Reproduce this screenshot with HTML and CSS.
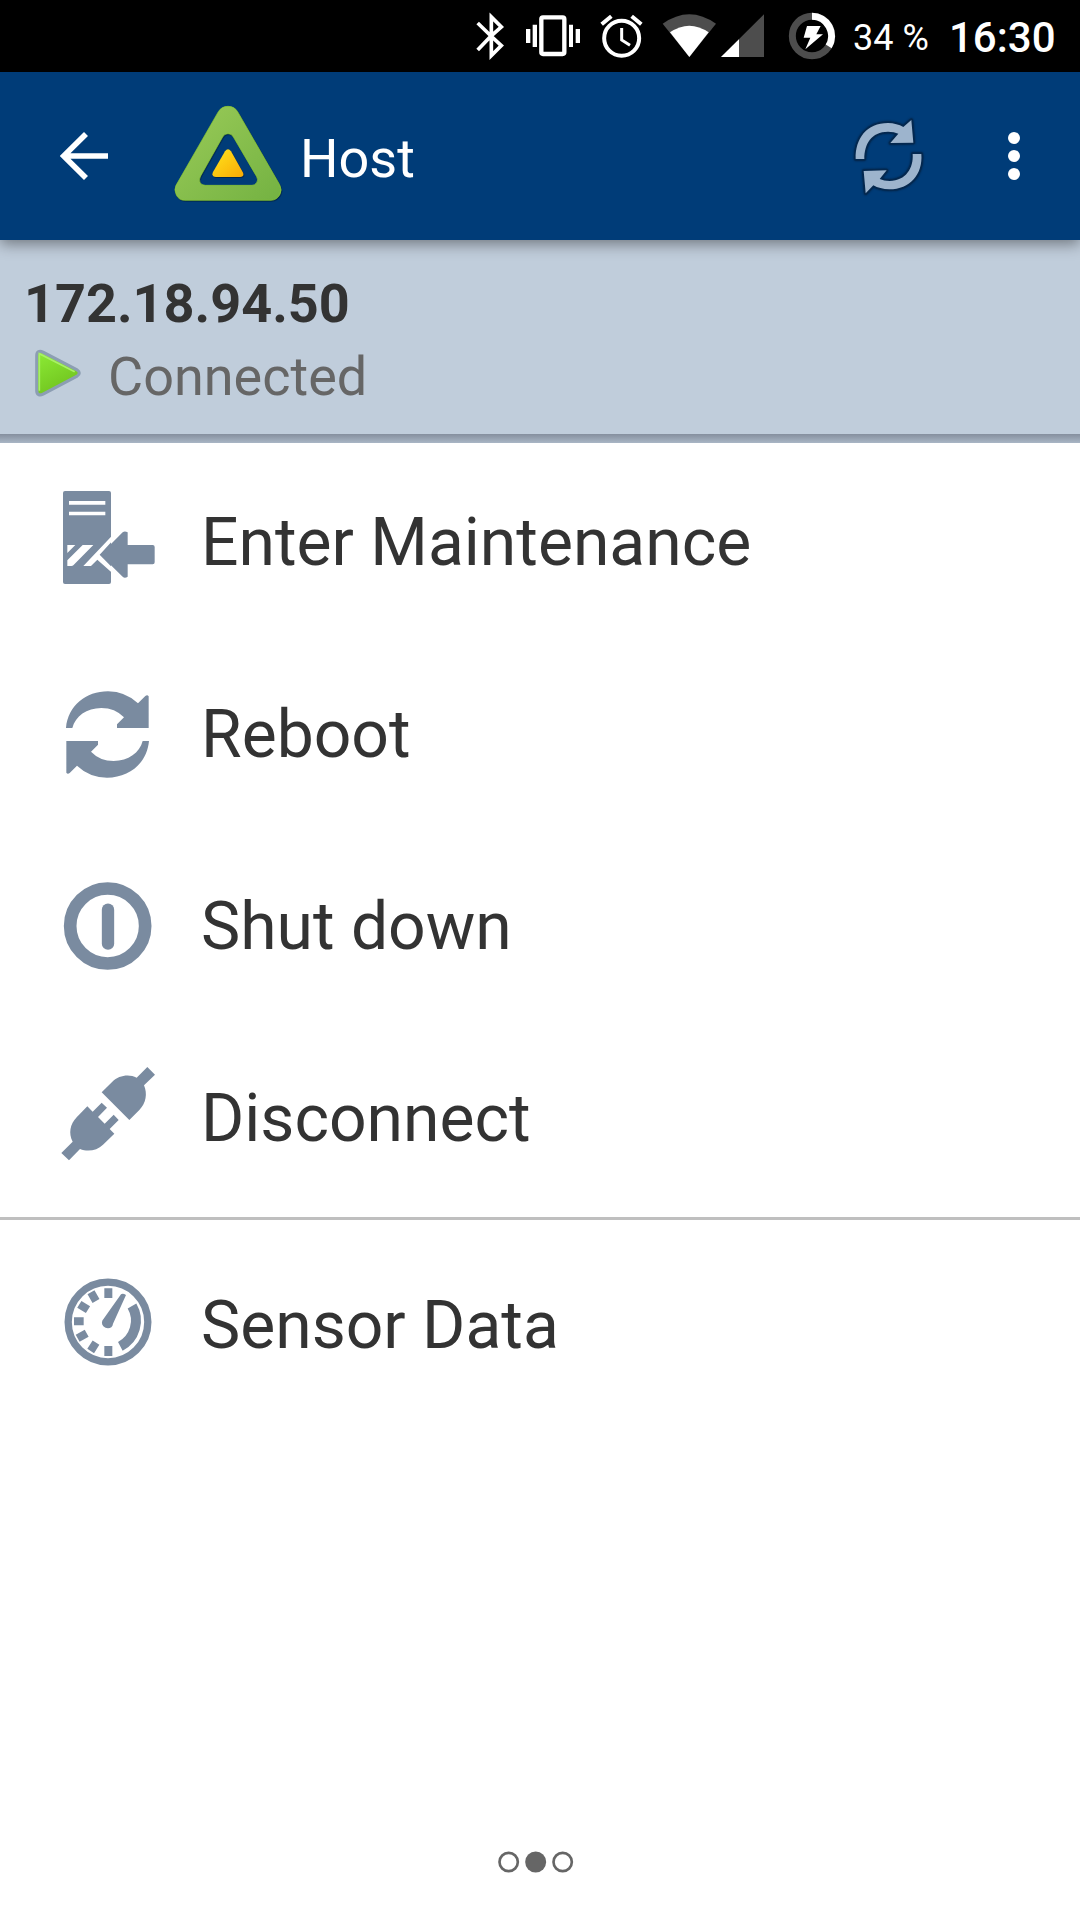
FILE: index.html
```
<!DOCTYPE html>
<html lang="en">
<head>
<meta charset="utf-8">
<meta name="viewport" content="width=device-width">
<title>Host</title>
<link rel="stylesheet" href="styles.css">
</head>
<body>
<div class="screen">
  <div class="status">
    <svg class="status-icons" viewBox="0 0 915 216">
      <path d="M53 69 93 108 53 150M93 108 124 137 94 167V51L124 81Z" fill="none" stroke="#fff" stroke-width="11"/>
      <g fill="#fff"><path d="M198 87h13v42h-13zM218 74h13v67h-13zM327 74h12v67h-12zM347 87h13v42h-13z"/></g>
      <rect x="244" y="52" width="69" height="110" rx="5" fill="none" stroke="#fff" stroke-width="13"/>
      <g fill="none" stroke="#fff"><circle cx="485" cy="115" r="52.500" stroke-width="12"/><path d="M485 84v36l25 16" stroke-width="9"/><path d="M425 73l29-24M515 49l29 24" stroke-width="12"/></g>
      <path d="M608 71Q688 14 768 71L688 171Z" fill="#4d4d4d"/>
      <path d="M630 97Q688 57 746 97L688 171Z" fill="#fff"/>
      <path d="M783 171 912 43V171Z" fill="#4d4d4d"/>
      <path d="M783 171 837 118V171Z" fill="#fff"/>
    </svg>
    <svg class="battery" viewBox="72 0 168 216">
      <circle cx="156" cy="108" r="59" fill="none" stroke="#4d4d4d" stroke-width="21"/>
      <path d="M156 49A59 59 0 0 1 206 139" fill="none" stroke="#fff" stroke-width="21"/>
      <path d="M141 78h41l-13 25h20l-53 45 15-35h-20z" fill="#fff"/>
    </svg>
    <span class="percent">34 %</span>
    <span class="clock">16:30</span>
  </div>

  <header class="bar">
    <svg class="back" viewBox="60 -54 150 504"><path d="M204 198H73M138 132 71 198l67 66" fill="none" stroke="#fff" stroke-width="17"/></svg>
    <svg class="logo" viewBox="396 -54 336 504">
      <defs>
        <linearGradient id="green" x1="0" y1="0" x2="1" y2="1"><stop offset="0" stop-color="#9acb58"/><stop offset="1" stop-color="#74b242"/></linearGradient>
        <linearGradient id="gold" x1="0" y1="0" x2="1" y2="1"><stop offset="0" stop-color="#ffe51c"/><stop offset="1" stop-color="#f9aa06"/></linearGradient>
      </defs>
      <path class="drop" fill="url(#green)" stroke="#8fd02f" stroke-width="2" fill-rule="evenodd" d="M535 65Q545 49 564 49T593 65L719 284Q728 300 719 315T694 331H434Q417 331 409 315T408 286ZM548 141Q553 131 564 131T580 141L650 260Q656 270 650 278T636 286H496Q484 286 480 277T482 258Z"/>
      <path class="drop" fill="url(#gold)" d="M555 184Q564 172 573 184L608 246Q615 260 600 261H528Q513 260 519 246Z"/>
    </svg>
    <h1 class="title">Host</h1>
    <svg class="refresh" viewBox="60 -84 240 504">
      <g class="glow" fill="#9db4cd" stroke="#04284f" stroke-width="10" stroke-linejoin="round" paint-order="stroke">
        <path d="M77 177C75 116 110 69 174 69Q201 70 220 81L244 60 250 128 181 129 205 101Q193 95 174 95C124 95 103 132 103 177Z"/>
        <path d="M274 162C279 223 240 268 178 268Q149 267 130 256L107 280 101 213 170 211 149 237Q162 243 179 243C228 242 251 204 248 162Z"/>
      </g>
    </svg>
    <svg class="more" viewBox="522 -84 60 504"><g fill="#fff"><circle cx="552" cy="114" r="18"/><circle cx="552" cy="168" r="18"/><circle cx="552" cy="222" r="18"/></g></svg>
  </header>

  <section class="host">
    <div class="address">172.18.94.50</div>
    <div class="state">
      <svg class="play" viewBox="99 351 150 156">
        <defs><linearGradient id="lime" x1="0" y1="0" x2=".5" y2="1"><stop offset="0" stop-color="#8cea35"/><stop offset="1" stop-color="#71c41f"/></linearGradient></defs>
        <path d="M127 371 229 424Q237 429 229 434L127 488Q115 494 115 482V377Q115 365 127 371Z" fill="url(#lime)" stroke="#8c9eb3" stroke-width="19" stroke-linejoin="round" paint-order="stroke"/>
        <path d="M118 482V371L224 425" fill="none" stroke="#a8f067" stroke-width="5"/>
      </svg>
      <span>Connected</span>
    </div>
  </section>

  <ul class="menu">
    <li class="item">
      <svg class="icon" viewBox="0 -72 420 576">
        <rect x="69" y="63" width="144" height="279" rx="6"/>
        <path class="cut" d="M87 93H196V104H87ZM87 125H196V136H87ZM82 225H106L82 249ZM128 225H160L100 286Q98 288 94 288H82V271Z"/>
        <path class="cut" d="M130 288 216 197V214L179 254 216 292V308L172 269 153 288Z"/>
        <path d="M181 254 248 187Q254 182 263 187V225H338Q344 225 344 231V277Q344 283 338 283H263V320Q254 326 248 320Z"/>
      </svg>
      <span>Enter Maintenance</span>
    </li>
    <li class="item">
      <svg class="icon" viewBox="0 -96 420 576">
        <path id="arrow" d="M78 174C84 107 138 64 204 64Q257 65 294 100L316 78Q322 73 326 79V174H231V163L252 142Q225 114 184 114C140 114 106 139 97 174Z"/>
        <use href="#arrow" transform="rotate(180 202.500 193.500)"/>
      </svg>
      <span>Reboot</span>
    </li>
    <li class="item">
      <svg class="icon" viewBox="0 -90 420 576">
        <circle class="line" cx="203" cy="198" r="112.500" stroke-width="38"/>
        <path class="line" d="M204 149V251" stroke-width="37" stroke-linecap="round"/>
      </svg>
      <span>Shut down</span>
    </li>
    <li class="item">
      <svg class="icon" viewBox="0 -84 420 576">
        <path d="M185 127 217 95C236 76 267 71 290 83L322 51 345 74 312 106C323 131 318 160 298 180L268 210Z"/>
        <path d="M142 169 158 185 185 158 201 173 174 201 194 221 221 194 236 210 209 237 223 251 189 284C171 302 143 306 120 297L87 331 64 309 98 275C85 251 90 222 110 202Z"/>
      </svg>
      <span>Disconnect</span>
    </li>
    <li class="item separated">
      <svg class="icon" viewBox="0 -93 420 576">
        <circle class="line" cx="204" cy="186" r="119.500" stroke-width="22"/>
        <path class="line" stroke-width="24" d="M205 85V114M205 258V288M102 184H131M153 97 168 123M118 133 144 149M113 235 140 220M152 273 168 248"/>
        <path class="line" stroke-width="30" d="M276 138A87 87 0 0 1 241 259"/>
        <path d="M243 103Q248 98 258 105L219 191C218 206 200 209 190 199Q181 187 191 176Z"/>
      </svg>
      <span>Sensor Data</span>
    </li>
  </ul>

  <svg class="pager" viewBox="54 30 228 72">
    <g fill="none" stroke="#666" stroke-width="8"><circle cx="86" cy="66" r="27.500"/><circle cx="248" cy="66" r="27.500"/></g><circle cx="167" cy="66" r="31.500" fill="#666"/>
  </svg>
</div>
</body>
</html>
```
FILE: styles.css
```
* { box-sizing: border-box; }
body { margin: 0; font-family: Roboto, "Noto Sans", sans-serif; background: #fff; color: #333; }
svg { display: block; flex: none; }
span { white-space: nowrap; }
.screen { width: 1080px; height: 1920px; display: flex; flex-direction: column; overflow: hidden; }

.status { height: 72px; flex: none; display: flex; align-items: center; background: #000; color: #fff; padding-left: 460px; }
.status-icons { width: 305px; height: 72px; }
.battery { width: 56px; height: 72px; margin-left: 19px; }
.percent { font-size: 36px; line-height: 72px; margin: 4px 0 0 13px; width: 76px; }
.clock { font-size: 42px; line-height: 72px; font-weight: 500; margin: 4px 0 0 20px; }

.bar { height: 168px; flex: none; display: flex; background: #003c78; color: #fff; padding-left: 60px; box-shadow: 0 4px 14px rgba(0, 0, 0, .42); position: relative; }
.back { width: 50px; height: 168px; }
.logo { width: 112px; height: 168px; margin-left: 62px; }
.drop { filter: drop-shadow(2px 3px 2px #00284f); }
.title { margin: 3px 0 0 16px; font-size: 54px; font-weight: 400; line-height: 168px; width: 550px; }
.refresh { width: 80px; height: 168px; }
.glow { filter: drop-shadow(0 0 3px #021f3e); }
.more { width: 20px; height: 168px; margin-left: 74px; }

.host { height: 203px; flex: none; padding: 32px 24px 0; background: linear-gradient(#c0cddb 194px, #858f9e 194px, #a9b6c5 203px); }
.address { font-size: 54px; font-weight: 700; line-height: 64px; }
.state { display: flex; color: #666; font-size: 54px; line-height: 64px; padding: 9px 0 0 9px; }
.play { width: 50px; height: 52px; margin: 2px 25px 0 0; }

.menu { margin: 0; padding: 3px 0 0; list-style: none; flex: 1; }
.item { height: 192px; display: flex; padding-left: 40px; font-size: 66px; line-height: 194px; }
.icon { width: 140px; height: 192px; margin-right: 21px; fill: #7a8ba0; }
.line { fill: none; stroke: #7a8ba0; }
.cut { fill: #fff; }
.separated { height: 206px; margin-top: 3px; padding-top: 9px; border-top: 3px solid #bfbfbf; }
.pager { width: 76px; height: 24px; margin: 0 0 46px 498px; }
```
